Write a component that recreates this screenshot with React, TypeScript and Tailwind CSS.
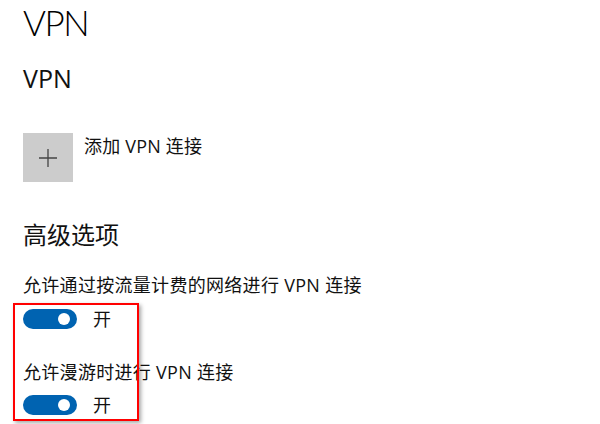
import React from 'react';

function Toggle() {
  return (
    <div className="flex items-center gap-[16px]">
      <div className="w-[54px] h-[20px] rounded-full bg-[#0063b1] flex items-center justify-end pr-[7px]">
        <div className="w-[12px] h-[12px] rounded-full bg-white" />
      </div>
      <span className="text-[18px] leading-[24px]">开</span>
    </div>
  );
}

export default function App() {
  return (
    <div className="relative w-[600px] h-[424px] overflow-hidden bg-white text-[#111] pl-[23px] pt-[1px] font-['Open_Sans','Noto_Sans_CJK_SC',sans-serif]">
      {/* 标题 */}
      <h1 className="text-[35px] font-light leading-[42px] tracking-[-1.5px] text-[#000] font-['Lato','Open_Sans',sans-serif]">VPN</h1>
      <h2 className="mt-[19px] text-[25px] leading-[32px]">VPN</h2>

      {/* 添加 VPN 连接 */}
      <div className="mt-[39px] flex items-start gap-[11px]">
        <div className="w-[50px] h-[49px] bg-[#cccccc] flex items-center justify-center">
          <svg width="20" height="20" viewBox="0 0 20 20">
            <path d="M10 1v18M1 10h18" stroke="#444" strokeWidth="1.3" fill="none" />
          </svg>
        </div>
        <span className="mt-[1px] text-[18px] leading-[24px] tracking-[0.2px]">添加 VPN 连接</span>
      </div>

      {/* 高级选项 */}
      <h2 className="mt-[37px] text-[24px] leading-[32px]">高级选项</h2>

      <p className="mt-[22px] text-[18px] leading-[24px] tracking-[0.3px]">允许通过按流量计费的网络进行 VPN 连接</p>
      <div className="mt-[10px]">
        <Toggle />
      </div>

      <p className="mt-[29px] text-[18px] leading-[24px] tracking-[0.3px]">允许漫游时进行 VPN 连接</p>
      <div className="mt-[9px]">
        <Toggle />
      </div>

      {/* 标注框 */}
      <div className="absolute left-[13px] top-[303px] w-[126px] h-[118px] border-2 border-[#ff0000] shadow-[2px_2px_4px_rgba(0,0,0,0.35)]" />
    </div>
  );
}
